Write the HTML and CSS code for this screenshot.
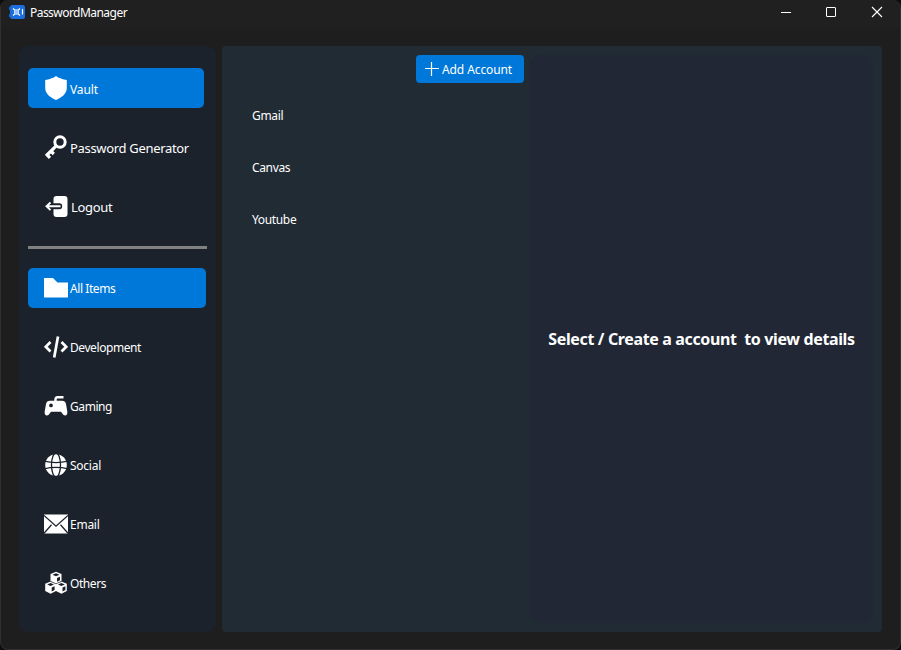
FILE: index.html
```html
<!DOCTYPE html>
<html lang="en">
<head>
<meta charset="utf-8">
<title>PasswordManager</title>
<link rel="stylesheet" href="styles.css">
</head>
<body>
<div class="window">
  <header class="titlebar">
    <svg class="app-icon" width="17" height="14" viewBox="0 0 17 14"><rect x="1" y="0" width="15" height="14" rx="2.500" fill="#1c6ddd"/><path d="M0 2h2v3H0zM0 9h2v3H0z" fill="#1762cc"/><path d="M4 3.500l2 1.700M11 3.500L9 5.200M4 10.500l2-1.700M11 10.500L9 8.800" stroke="#fff" stroke-width="1.200"/><rect x="5.500" y="4.900" width="4" height="4.200" rx="1" fill="#8fc0ff" stroke="#d4e6ff"/><path d="M13.500 4v5.500" stroke="#fff" stroke-width="1.200"/></svg>
    <span class="app-name">PasswordManager</span>
    <div class="controls">
      <svg width="12" height="12" viewBox="0 0 12 12"><path d="M1 6.500h10" stroke="#fff"/></svg>
      <svg width="12" height="12" viewBox="0 0 12 12"><rect x="1.500" y="1.500" width="9" height="9" rx=".5" fill="none" stroke="#fff"/></svg>
      <svg width="12" height="12" viewBox="0 0 12 12"><path d="M1 1l10 10M11 1L1 11" stroke="#fff" stroke-width="1.100"/></svg>
    </div>
  </header>
  <div class="body">
    <aside class="sidebar">
      <nav class="group main-group">
        <div class="item active"><svg class="icon" viewBox="0 0 24 24"><path d="M12 0C9.500 2 5 3.600 1.200 4v8c0 5.500 4.800 9.500 10.800 12 6-2.500 10.800-6.500 10.800-12V4C19 3.600 14.500 2 12 0z" fill="#fff"/></svg><span class="label vault">Vault</span></div>
        <div class="item"><svg class="icon" viewBox="0 0 24 24"><circle cx="16" cy="7" r="5.200" fill="none" stroke="#fff" stroke-width="3"/><path d="M12.200 10.800L2 21M3 19.800l3 3M6.800 16l3 3" fill="none" stroke="#fff" stroke-width="3.200"/></svg><span class="label wide">Password Generator</span></div>
        <div class="item"><svg class="icon" viewBox="0 0 24 24"><path d="M9.500 9.300V5Q9.500 2 12.500 2h8Q23.500 2 23.500 5v15q0 3-3 3h-8q-3 0-3-3v-4.700h6q2.700 0 2.700-3t-2.700-3z" fill="#fff"/><path d="M16.500 12.300H2.500M6.500 8.500l-4 3.800 4 3.800" fill="none" stroke="#fff" stroke-width="1.900"/></svg><span class="label wide logout">Logout</span></div>
      </nav>
      <div class="divider"></div>
      <nav class="group folders">
        <div class="item active"><svg class="icon" viewBox="0 0 24 24"><path d="M0 2h9l4.500 4.500H24V21.500H0z" fill="#fff"/></svg><span class="label">All Items</span></div>
        <div class="item"><svg class="icon" viewBox="0 0 24 24"><path d="M6.500 7L1.800 11.800l4.700 4.700M17.500 7l4.700 4.800-4.700 4.700" fill="none" stroke="#fff" stroke-width="2.700"/><path d="M14 1.500L10.200 22.500" stroke="#fff" stroke-width="2.700"/></svg><span class="label">Development</span></div>
        <div class="item"><svg class="icon" viewBox="0 0 24 24"><path d="M11.500 8V5.500Q11.500 3.300 13.500 3.300H19.500" fill="none" stroke="#fff" stroke-width="2.400"/><path fill-rule="evenodd" d="M6 6.800h12q3.200 0 4 3.200l1.300 7.500q.4 3.500-1.800 4-2 .3-3.200-2L17 17.800H7l-1.300 1.700q-1.200 2.300-3.200 2-2.200-.5-1.800-4L2 10q.8-3.200 4-3.200zM7 9.500A1.900 1.900 0 1 0 7 13.300A1.900 1.900 0 1 0 7 9.500z" fill="#fff"/></svg><span class="label">Gaming</span></div>
        <div class="item"><svg class="icon" viewBox="0 0 24 24"><circle cx="12" cy="12" r="10.800" fill="#fff"/><g fill="none" stroke="#1b222c" stroke-width="1.300"><ellipse cx="12" cy="12" rx="4.500" ry="12"/><path d="M0 8.200q12 3 24 0M0 15.800q12-3 24 0"/></g></svg><span class="label social">Social</span></div>
        <div class="item"><svg class="icon" viewBox="0 0 24 24"><path d="M0 2.500h24v19H0z" fill="#fff"/><path d="M0 3.500l12 10.700L24 3.500M0 21.200l7.500-8.500M24 21.200l-7.500-8.500" fill="none" stroke="#1b222c" stroke-width="1.300"/></svg><span class="label social">Email</span></div>
        <div class="item"><svg class="icon" viewBox="0 0 24 24"><g fill="#fff"><path d="M12 .8l5.500 2.300v7L12 12.800l-5.500-2.700v-7z"/><path d="M6.600 10.500L12 12.800v7.200l-5.400 2.700L1.200 20v-7.200z"/><path d="M17.400 10.500l5.400 2.300V20l-5.400 2.700L12 20v-7.200z"/></g><g fill="#1b222c"><path d="M12 2.300l3.500 1.500L12 5.200 8.500 3.800z"/><path d="M13 7l3-1.300v3.600L13 10.800z"/><path d="M6.600 12l3.400 1.400-3.400 1.500-3.400-1.500zM17.400 12l3.400 1.400-3.400 1.500-3.400-1.500z"/><path d="M7.700 16.500l2.900-1.300v3.900l-2.900 1.500zM18.500 16.500l2.900-1.300v3.900l-2.900 1.500z"/></g><path d="M6.600 10.500L12 12.800l5.400-2.300" fill="none" stroke="#1b222c" stroke-width=".6"/></svg><span class="label">Others</span></div>
      </nav>
    </aside>
    <main class="content">
      <section class="accounts">
        <button class="add"><svg width="14" height="14" viewBox="0 0 14 14"><path d="M6.500 0v14M0 6.500h14" stroke="#fff" stroke-width="1.200"/></svg><span>Add Account</span></button>
        <ul class="list"><li>Gmail</li><li>Canvas</li><li>Youtube</li></ul>
      </section>
      <section class="details"><h1>Select / Create a account&nbsp; to view details</h1></section>
    </main>
  </div>
</div>
</body>
</html>
```
FILE: styles.css
```css
* { box-sizing: border-box; }
body {
  margin: 0;
  background: #0c0c0c;
  color: #fff;
  font-family: "Noto Sans", "Open Sans", sans-serif;
  font-size: 12px;
}
.window {
  height: 650px;
  background: #1e1e1e;
  border: 1px solid #303030;
  border-top: 0;
  border-radius: 8px;
  overflow: hidden;
}
.titlebar {
  display: flex;
  align-items: center;
  height: 28px;
  padding: 0 17px 4px 8px;
  background: #202020;
}
.app-name { margin: 1px 0 0 4px; letter-spacing: -0.54px; white-space: nowrap; }
.controls { display: flex; gap: 33px 33px; margin-left: auto; }
.controls svg:last-child { margin-left: 1px; }
.body { display: flex; gap: 6px; height: 604px; padding: 18px 18px 0; }
.sidebar {
  width: 197px;
  height: 586px;
  padding: 22px 8px 0 9px;
  border-radius: 9px;
  background: #1b222c;
}
.group { display: flex; flex-direction: column; gap: 19px; width: 178px; }
.main-group { width: 176px; }
.item {
  display: flex;
  align-items: center;
  gap: 2px;
  height: 40px;
  padding: 0 0 0 16px;
  border-radius: 5px;
}
.active { background: #0078d9; }
.icon { width: 24px; height: 24px; flex: none; }
.label { padding-top: 2px; letter-spacing: -0.42px; white-space: nowrap; }
.folders .label { padding-top: 0; }
.label.vault { letter-spacing: -0.1px; }
.label.social { letter-spacing: -0.25px; }
.wide { font-size: 13px; letter-spacing: -0.32px; }
.logout { margin-left: 1px; }
.divider { width: 179px; height: 3px; margin: 20px 0 19px; background: #808080; }
.content {
  display: flex;
  width: 660px;
  height: 586px;
  padding: 9px;
  border-radius: 4px;
  background: #212b34;
}
.accounts { display: flex; flex-direction: column; width: 299px; }
.add {
  display: flex;
  align-items: center;
  align-self: flex-end;
  gap: 3px;
  width: 108px;
  height: 28px;
  margin-right: 6px;
  padding: 0 0 0 9px;
  border: 0;
  border-radius: 4px;
  background: #0078d9;
  color: #fff;
  font: inherit;
  letter-spacing: -0.1px;
  white-space: nowrap;
}
.add span { padding-top: 1px; }
.list { margin: 7px 0 0; padding: 0 0 0 21px; list-style: none; letter-spacing: -0.35px; }
.list li { height: 52px; line-height: 52px; }
.details {
  display: flex;
  align-items: center;
  justify-content: center;
  width: 343px;
  border-radius: 10px;
  background: #212734;
}
h1 { margin: 0; font-size: 16px; line-height: 20px; font-weight: 700; letter-spacing: -0.36px; white-space: nowrap; }
```
